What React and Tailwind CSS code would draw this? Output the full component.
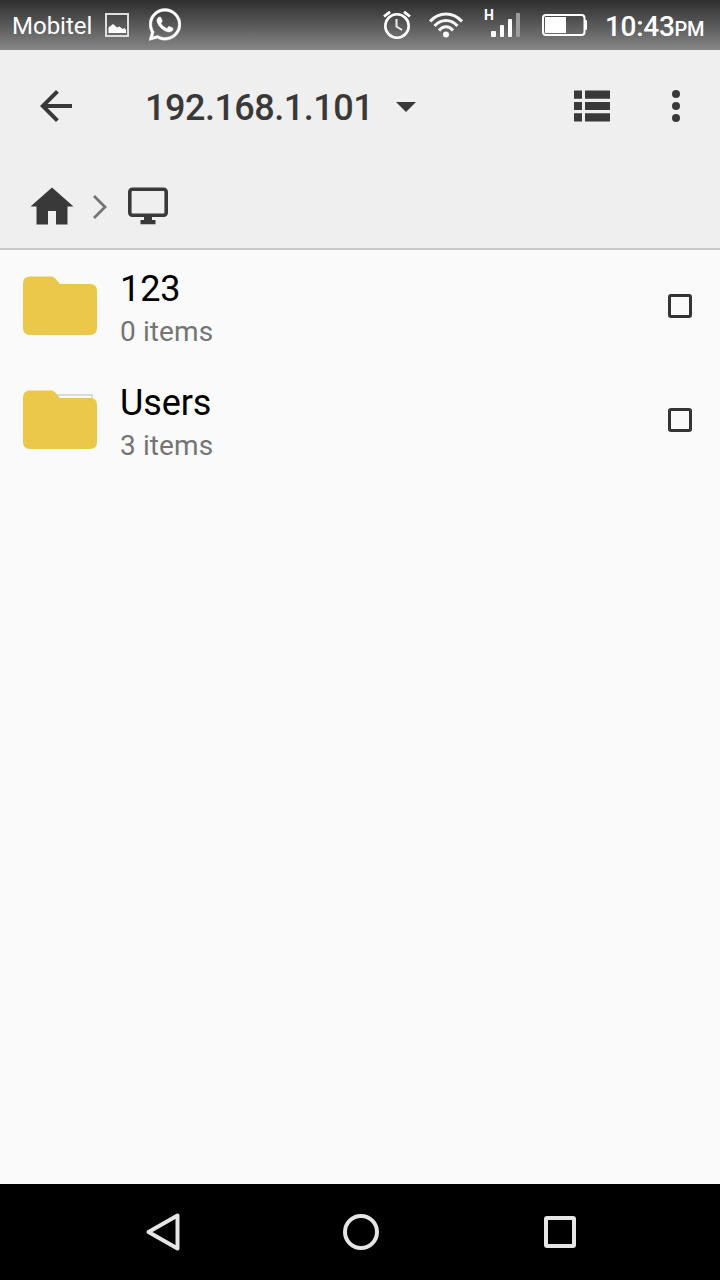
import { FaWhatsapp } from "react-icons/fa";

const FILES = [
  { name: "123", count: 0 },
  { name: "Users", count: 3 },
];

function StatusBar() {
  return (
    <div className="flex h-[50px] shrink-0 items-center bg-linear-to-b from-[#2f2f2f] to-[#878787] pr-4 pl-3 text-white">
      <span className="mt-[2px] w-[93px] text-[24px] leading-[28px]">Mobitel</span>
      <svg className="h-6 w-6" viewBox="0 0 24 24">
        <rect x="1" y="1" width="22" height="22" fill="none" stroke="#dedede" strokeWidth="2" />
        <path d="M3.500 20v-5.500L8 11l4 3.500 2.500-1 3 2.500 2-1 1.500 2v3z" fill="#fff" />
      </svg>
      <FaWhatsapp className="mb-[2px] ml-5 h-[37px] w-8" stroke="#fff" strokeWidth="6" />

      <svg className="ml-auto h-7 w-7" viewBox="0 0 28 28" fill="none" stroke="#fff">
        <circle cx="14" cy="15" r="11.700" strokeWidth="2.600" />
        <path d="M13.500 8v7.500l5.500 3.500" stroke="#eee" strokeWidth="2" />
        <path d="M1 5.500L7 .8M27 5.500L21 .8" strokeWidth="2.800" />
      </svg>
      <svg className="ml-[18px] h-[26px] w-[34px]" viewBox="0 0 34 26" fill="none" stroke="#f4f4f4">
        <path d="M1 9.500C10 -.5 24 -.5 33 9.500" strokeWidth="3.200" />
        <path d="M5.500 14C12 6.500 22 6.500 28.500 14" strokeWidth="3" />
        <path d="M10 18.500C14 13.500 20 13.500 24 18.500" strokeWidth="3" />
        <circle cx="17" cy="22.500" r="3" fill="#fff" stroke="none" />
      </svg>
      <div className="ml-[21px] flex h-[30px] items-end gap-1">
        <span className="-mt-[2px] -mr-[7px] w-[10px] self-start text-[14px] leading-[14px] font-bold">H</span>
        <span className="mb-[3px] h-[6px] w-[5px] rounded-[1px] bg-white" />
        <span className="mb-[3px] h-3 w-1 rounded-[1px] bg-white" />
        <span className="mb-[3px] h-[18px] w-1 rounded-[1px] bg-white" />
        <span className="mb-[3px] h-6 w-1 rounded-[1px] bg-[#9b9b9b]" />
      </div>
      <svg className="ml-[22px] h-[22px] w-[46px]" viewBox="0 0 46 22">
        <rect x="1" y="1" width="41.500" height="20" rx="3" fill="none" stroke="#fff" strokeWidth="2" />
        <rect x="3" y="3" width="21" height="16" fill="#fff" />
        <rect x="42" y="6" width="3" height="10" rx="1" fill="#fff" />
      </svg>
      <span className="mt-[6px] ml-[17px] w-[99px] text-[28px] leading-[33px] font-medium tracking-[-0.3px] whitespace-nowrap">
        10:43<span className="text-[20px]">PM</span>
      </span>
    </div>
  );
}

function Toolbar() {
  return (
    <div className="flex h-28 items-center">
      <svg className="ml-8 h-12 w-12" viewBox="0 0 24 24" fill="#393939">
        <path d="M20 11H7.83l5.59-5.59L12 4l-8 8 8 8 1.41-1.41L7.83 13H20v-2z" />
      </svg>
      <h1 className="mt-[4px] ml-[65px] w-[227px] text-[36px] leading-[42px] font-medium tracking-[-0.5px]">
        192.168.1.101
      </h1>
      <svg className="mt-[2px] ml-[24px] h-[10px] w-5" viewBox="0 0 20 10" fill="#393939">
        <path d="M0 0h20L10 10z" />
      </svg>
      <svg className="ml-auto h-8 w-9" viewBox="0 0 36 32" fill="#393939">
        <path d="M0 .4h8v8.400H0zM11 .4h25v8.400H11zM0 12h8v8H0zM11 12h25v8H11zM0 23.200h8v8.400H0zM11 23.200h25v8.400H11z" />
      </svg>
      <svg className="mr-5 ml-[42px] h-12 w-12" viewBox="0 0 48 48" fill="#393939">
        <circle cx="24" cy="12" r="4" />
        <circle cx="24" cy="24" r="4" />
        <circle cx="24" cy="36" r="4" />
      </svg>
    </div>
  );
}

function Breadcrumbs() {
  return (
    <div className="flex h-[86px] items-center pl-[30px]">
      <svg className="h-10 w-11" viewBox="0 0 44 40" fill="#393939">
        <path d="M22 2.500L43.500 21.500h-6v18H26V26h-8v13.500H6.500v-18h-6z" />
      </svg>
      <svg className="mt-[3px] ml-[18px] h-6 w-4" viewBox="0 0 16 24" fill="none" stroke="#747474" strokeWidth="2.800">
        <path d="M2 1L13 12L2 23" />
      </svg>
      <svg className="ml-5 h-10 w-10" viewBox="0 0 40 40">
        <rect x="1.800" y="4.200" width="36.400" height="26" rx="2.500" fill="none" stroke="#393939" strokeWidth="3.600" />
        <path d="M16 31h8v4h3.500v4.300h-15V35H16z" fill="#393939" />
      </svg>
    </div>
  );
}

function FolderIcon({ filled }) {
  return (
    <svg className="h-[60px] w-[74px]" viewBox="0 0 74 60">
      {filled && <path d="M30 5h39v8H30z" fill="#fff" stroke="#cecece" strokeWidth="1.500" />}
      <path
        d="M7 .5h21.500q2 0 3.500 1.800L37 8h30q7 0 7 7v37q0 7-7 7H7q-7 0-7-7V7.500q0-7 7-7z"
        fill="#ebc84a"
      />
    </svg>
  );
}

function FileRow({ file }) {
  return (
    <li className="flex h-[114px] items-start pt-[18px] pr-7 pl-[23px]">
      <div className="pt-2">
        <FolderIcon filled={file.count > 0} />
      </div>
      <div className="ml-[23px] flex-1">
        <p className="text-[36px] leading-[42px] tracking-[-0.1px] text-black">{file.name}</p>
        <p className="mt-[5px] text-[28px] leading-[33px] tracking-[0.1px] text-[#757575]">{file.count} items</p>
      </div>
      <span className="mt-[26px] h-6 w-6 rounded-[3px] border-3 border-[#333]" />
    </li>
  );
}

function NavBar() {
  return (
    <nav className="flex h-24 shrink-0 items-center bg-black pl-[145px]">
      <svg className="h-10 w-9" viewBox="0 0 36 40" fill="none" stroke="#e6e6e6" strokeWidth="4">
        <path d="M32.500 3.500v33L3.500 20z" strokeLinejoin="round" />
      </svg>
      <span className="ml-[162px] h-9 w-9 rounded-full border-4 border-[#e6e6e6]" />
      <span className="ml-[165px] h-8 w-8 rounded-[3px] border-4 border-[#e6e6e6]" />
    </nav>
  );
}

export default function App() {
  return (
    <div className="flex h-screen w-full flex-col overflow-hidden bg-[#fafafa] font-['Roboto',sans-serif]">
      <StatusBar />
      <header className="h-[200px] shrink-0 border-b-2 border-[#c8c8c8] bg-[#efefef] text-[#393939]">
        <Toolbar />
        <Breadcrumbs />
      </header>
      <ul className="flex-1">
        {FILES.map((f) => (
          <FileRow key={f.name} file={f} />
        ))}
      </ul>
      <NavBar />
    </div>
  );
}
